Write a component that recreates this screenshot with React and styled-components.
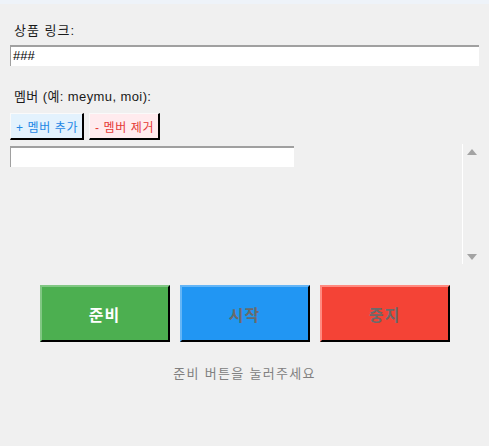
import React from "react";
import styled, { createGlobalStyle } from "styled-components";

const Global = createGlobalStyle`
  html, body { margin: 0; padding: 0; background: #f0f0f0; }
  body { font-family: "Liberation Sans", "Noto Sans CJK KR", sans-serif; }
`;

const TopStrip = styled.div`
  height: 4px;
  background: #eef3f9;
`;

const Page = styled.div`
  padding: 0 10px;
  display: flex;
  flex-direction: column;
`;

const Label = styled.div`
  font-size: 13px;
  line-height: 16px;
  color: #1a1a1a;
  padding-left: 4px;
  letter-spacing: ${(p) => p.$ls || 0}px;
  margin-top: ${(p) => p.$top}px;
`;

const TextInput = styled.div`
  box-sizing: border-box;
  height: ${(p) => p.$h}px;
  width: ${(p) => p.$w || "100%"};
  background: #fff;
  border-top: 2px solid #a0a0a0;
  border-left: 1px solid #a0a0a0;
  margin-top: ${(p) => p.$top}px;
  font-family: "Liberation Sans", sans-serif;
  font-size: 13px;
  line-height: 17px;
  padding-left: 2px;
  color: #000;
`;

const SmallRow = styled.div`
  display: flex;
  gap: 5px;
  margin-top: 8px;
`;

const SmallButton = styled.button`
  box-sizing: border-box;
  height: 27px;
  padding: 0 4px 0 5px;
  font-family: inherit;
  font-size: 12px;
  letter-spacing: 0.6px;
  background: ${(p) => p.$bg};
  color: ${(p) => p.$fg};
  border-top: 1px solid #fafafa;
  border-left: 1px solid #fafafa;
  border-right: 2px solid #000;
  border-bottom: 2px solid #000;
  cursor: pointer;
`;

const ListArea = styled.div`
  display: flex;
  height: 120px;
  margin-top: 4px;
`;

const ListBody = styled.div`
  flex: 1;
  padding-top: 2px;
`;

const Scrollbar = styled.div`
  width: 15px;
  margin-left: 5px;
  border-left: 1px solid #ffffff;
  display: flex;
  flex-direction: column;
  justify-content: space-between;
  align-items: center;
  padding: 5px 0 4px 1px;
`;

const Arrow = styled.div`
  width: 0;
  height: 0;
  border-left: 5px solid transparent;
  border-right: 5px solid transparent;
  ${(p) => (p.$up ? "border-bottom: 6px solid #a3a3a3;" : "border-top: 6px solid #a3a3a3;")}
`;

const BigRow = styled.div`
  display: flex;
  justify-content: center;
  gap: 10px;
  margin-top: 21px;
`;

const BigButton = styled.button`
  box-sizing: border-box;
  width: 130px;
  height: 57px;
  font-family: inherit;
  font-size: 16px;
  font-weight: bold;
  letter-spacing: 1px;
  background: ${(p) => p.$bg};
  color: ${(p) => (p.$active ? "#ffffff" : "#6a6a6a")};
  border-top: 2px solid ${(p) => p.$light};
  border-left: 2px solid ${(p) => p.$light};
  border-right: 2px solid #000;
  border-bottom: 2px solid #000;
  cursor: pointer;
`;

const Status = styled.div`
  text-align: center;
  font-size: 13px;
  letter-spacing: 1.3px;
  color: #808080;
  margin-top: 24px;
  line-height: 16px;
`;

export default function App() {
  return (
    <>
      <Global />
      <TopStrip />
      <Page>
        <Label $top={19} $ls={1}>상품 링크:</Label>
        <TextInput $h={21} $top={6}>###</TextInput>
        <Label $top={23} $ls={0.4}>멤버 (예: meymu, moi):</Label>
        <SmallRow>
          <SmallButton $bg="#e3f2fd" $fg="#1e88e5">+ 멤버 추가</SmallButton>
          <SmallButton $bg="#ffebee" $fg="#e53935">- 멤버 제거</SmallButton>
        </SmallRow>
        <ListArea>
          <ListBody>
            <TextInput $h={21} $w="284px" $top={0} />
          </ListBody>
          <Scrollbar>
            <Arrow $up />
            <Arrow />
          </Scrollbar>
        </ListArea>
        <BigRow>
          <BigButton $bg="#4caf50" $light="#81c784" $active>준비</BigButton>
          <BigButton $bg="#2196f3" $light="#64b5f6">시작</BigButton>
          <BigButton $bg="#f44336" $light="#ff8a80">중지</BigButton>
        </BigRow>
        <Status>준비 버튼을 눌러주세요</Status>
      </Page>
    </>
  );
}
